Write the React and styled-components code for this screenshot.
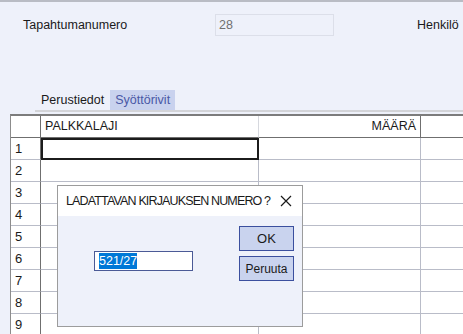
import React from 'react';
import styled, { createGlobalStyle } from 'styled-components';

const GlobalStyle = createGlobalStyle`
  html, body {
    margin: 0;
    padding: 0;
    background: #eef1fa;
  }
  body {
    font-family: "Liberation Sans", Arial, sans-serif;
    font-size: 12.5px;
    color: #1a1a1a;
  }
`;

const Page = styled.div`
  position: relative;
  width: 463px;
  height: 334px;
  overflow: hidden;
  border-top: 2px solid #b9bcc4;
  box-sizing: border-box;
  display: flex;
  flex-direction: column;
`;

const TopPanel = styled.div`
  height: 88px;
  flex-shrink: 0;
  display: flex;
  align-items: flex-start;
  padding: 12px 0 0 23px;
  box-sizing: border-box;
`;

const FieldLabel = styled.span`
  width: ${p => p.width || 'auto'};
  line-height: 22px;
  white-space: nowrap;
  flex-shrink: 0;
`;

const ReadOnlyInput = styled.div`
  width: 119px;
  height: 22px;
  box-sizing: border-box;
  border: 1px solid #dcdfe9;
  color: #707070;
  padding-left: 3px;
  line-height: 20px;
  margin-right: 83px;
  flex-shrink: 0;
`;

const TabBar = styled.div`
  display: flex;
  height: 20px;
  margin-left: 35px;
  border-bottom: 2px solid #d3d4d8;
  flex-shrink: 0;
`;

const Tab = styled.div`
  padding: 0 ${p => (p.active ? '5px' : '6px')};
  line-height: 20px;
  background: ${p => (p.active ? '#c9d2ee' : 'transparent')};
  color: ${p => (p.active ? '#4a58a6' : '#1a1a1a')};
`;

const Grid = styled.div`
  margin: 2px 0 0 10px;
  display: grid;
  grid-template-columns: 30px 218px 162px 120px;
  grid-auto-rows: 22px;
  border-top: 2px solid #7c7c7c;
  border-left: 1px solid #8c8c8c;
  background: #ffffff;
  width: 540px;
`;

const HeadCell = styled.div`
  box-sizing: border-box;
  border-right: 1px solid ${p => (p.dark ? '#6f6f6f' : '#d6d8de')};
  border-bottom: 1px solid #6f6f6f;
  padding: 0 4px;
  line-height: 21px;
  text-align: ${p => (p.right ? 'right' : 'left')};
  white-space: nowrap;
`;

const RowHead = styled.div`
  box-sizing: border-box;
  border-right: 1px solid #6f6f6f;
  border-bottom: 1px solid #b9bcc8;
  padding-left: 4px;
  line-height: 22px;
  font-size: 13px;
`;

const Cell = styled.div`
  box-sizing: border-box;
  border-right: 1px solid #b9bcc8;
  border-bottom: 1px solid #b9bcc8;
  outline: ${p => (p.selected ? '2px solid #1c1c1c' : 'none')};
  outline-offset: -2px;
`;

const Dialog = styled.div`
  position: absolute;
  left: 57px;
  top: 183px;
  width: 246px;
  height: 142px;
  box-sizing: border-box;
  border: 1px solid #9c9c9c;
  background: #eef1fa;
  display: flex;
  flex-direction: column;
`;

const TitleBar = styled.div`
  height: 30px;
  background: #ffffff;
  display: flex;
  align-items: center;
  justify-content: space-between;
  padding: 0 10px 0 8px;
  flex-shrink: 0;
  white-space: nowrap;
`;

const Title = styled.span`
  letter-spacing: -0.85px;
`;

const DialogBody = styled.div`
  flex: 1;
  display: flex;
  justify-content: space-between;
  padding: 10px 8px 0 36px;
`;

const ValueInput = styled.div`
  width: 99px;
  height: 20px;
  box-sizing: border-box;
  margin-top: 25px;
  border: 1px solid #4b5a96;
  background: #ffffff;
  padding: 1px 0 0 4px;
`;

const Selection = styled.span`
  background: #0078d7;
  color: #ffffff;
  line-height: 16px;
  display: inline-block;
`;

const ButtonColumn = styled.div`
  display: flex;
  flex-direction: column;
  gap: 5px;
`;

const Button = styled.div`
  width: 55px;
  height: 25px;
  box-sizing: border-box;
  border: 1px solid #3b4f9e;
  background: #c9d3ee;
  display: flex;
  align-items: center;
  justify-content: center;
  font-size: ${p => (p.small ? '12px' : '13px')};
`;

const CloseIcon = () => (
  <svg width="12" height="12" viewBox="0 0 12 12">
    <path d="M1 1 L11 11 M11 1 L1 11" stroke="#1a1a1a" strokeWidth="1.2" />
  </svg>
);

const rows = [1, 2, 3, 4, 5, 6, 7, 8, 9];

export default function App() {
  return (
    <>
      <GlobalStyle />
      <Page>
        <TopPanel>
          <FieldLabel width="192px">Tapahtumanumero</FieldLabel>
          <ReadOnlyInput>28</ReadOnlyInput>
          <FieldLabel>Henkilö</FieldLabel>
        </TopPanel>
        <TabBar>
          <Tab>Perustiedot</Tab>
          <Tab active>Syöttörivit</Tab>
        </TabBar>
        <Grid>
          <HeadCell dark />
          <HeadCell>PALKKALAJI</HeadCell>
          <HeadCell dark right>MÄÄRÄ</HeadCell>
          <HeadCell />
          {rows.map(n => (
            <React.Fragment key={n}>
              <RowHead>{n}</RowHead>
              <Cell selected={n === 1} />
              <Cell />
              <Cell />
            </React.Fragment>
          ))}
        </Grid>
        <Dialog>
          <TitleBar>
            <Title>LADATTAVAN KIRJAUKSEN NUMERO ?</Title>
            <CloseIcon />
          </TitleBar>
          <DialogBody>
            <ValueInput>
              <Selection>521/27</Selection>
            </ValueInput>
            <ButtonColumn>
              <Button>OK</Button>
              <Button small>Peruuta</Button>
            </ButtonColumn>
          </DialogBody>
        </Dialog>
      </Page>
    </>
  );
}
